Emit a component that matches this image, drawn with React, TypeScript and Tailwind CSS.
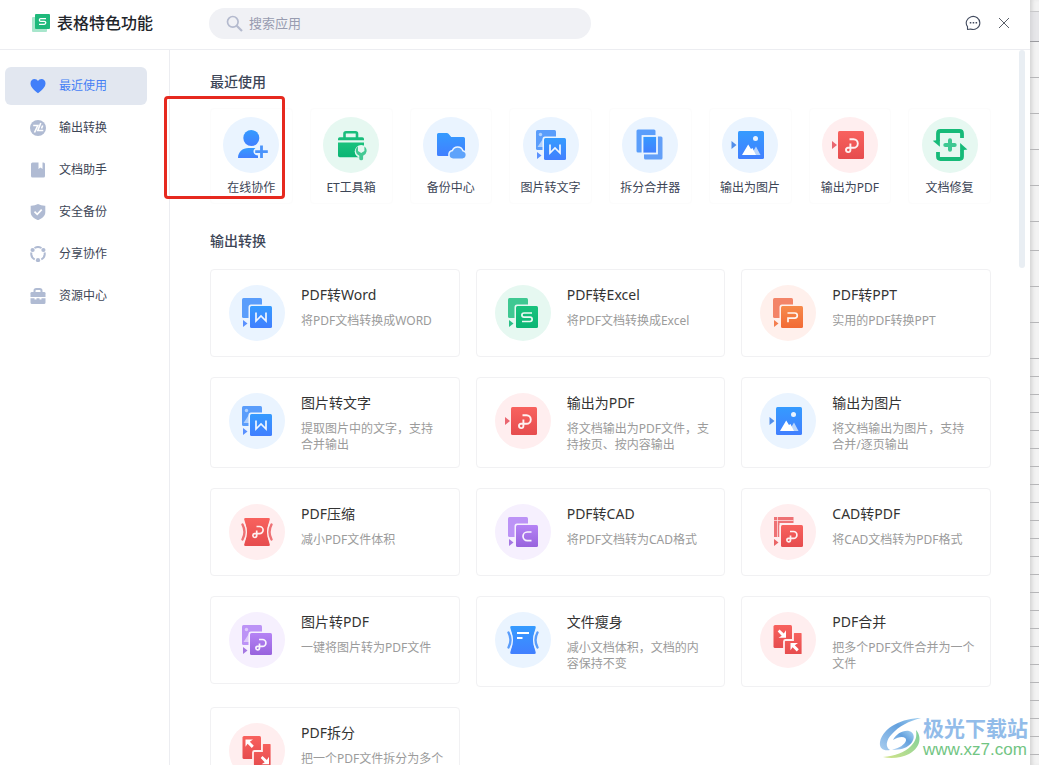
import React from "react";

type Tone = "blue" | "green" | "orange" | "red" | "purple";

const TONES: Record<Tone, { tint: string; from: string; to: string; back: string }> = {
  blue: { tint: "#eaf4ff", from: "#359bff", to: "#417fff", back: "#5a9dfb" },
  green: { tint: "#e6f8f1", from: "#1ac27d", to: "#0bb574", back: "#3fc892" },
  orange: { tint: "#fff0ec", from: "#f68a4b", to: "#f26a34", back: "#f38468" },
  red: { tint: "#ffeeef", from: "#f8625e", to: "#e64c4e", back: "#ee7275" },
  purple: { tint: "#f6f0fe", from: "#b583f5", to: "#9863dd", back: "#bc93f6" },
};

const fill = (tone: Tone) => `url(#grad-${tone})`;

function Gradients() {
  return (
    <svg className="absolute size-0" aria-hidden="true">
      <defs>
        {(Object.keys(TONES) as Tone[]).map((tone) => (
          <linearGradient key={tone} id={`grad-${tone}`} x1="0" y1="0" x2="0" y2="1">
            <stop offset="0" stopColor={TONES[tone].from} />
            <stop offset="1" stopColor={TONES[tone].to} />
          </linearGradient>
        ))}
      </defs>
    </svg>
  );
}

function Disc({ tone, children }: { tone: Tone; children: React.ReactNode }) {
  return (
    <svg viewBox="0 0 56 56" className="size-14 shrink-0" fill="none" aria-hidden="true">
      <circle cx="28" cy="28" r="28" fill={TONES[tone].tint} />
      {children}
    </svg>
  );
}

const MARKS = {
  w: "M27 27.500v8.500l5-5 5 5v-8.500",
  s: "M37 28h-8a2 2 0 0 0 0 4.200h6a2 2 0 0 1 0 4.300h-8",
  p: "M27.500 28h7.200a2.600 2.600 0 0 1 0 5.200H28v4",
  c: "M36.500 28h-4.200a4.300 4.300 0 0 0 0 8.600h4.200",
  loop: "M30 27.500h3.500a3.400 3.400 0 0 1 0 6.800h-5a1.800 1.800 0 1 0 2 1.800v-4.600",
};

function Convert({
  tone,
  mark,
  picture,
  ruler,
}: {
  tone: Tone;
  mark: keyof typeof MARKS;
  picture?: boolean;
  ruler?: boolean;
}) {
  const t = TONES[tone];
  return (
    <Disc tone={tone}>
      {ruler ? (
        <g>
          <path d="M14 13h19.500v6H19.500v14H14z" fill={t.back} />
          <path d="M14 16.500h19.500M17.500 13v20" stroke={t.tint} strokeWidth="0.700" />
        </g>
      ) : (
        <rect x="13" y="13" width="20" height="20" rx="1.500" fill={t.back} />
      )}
      {picture && (
        <g fill={t.tint} opacity="0.600">
          <circle cx="17.500" cy="17.500" r="1.700" />
          <path d="M14.500 30l6-9v9z" />
        </g>
      )}
      <path d="M14 35v7l4.500-3.500z" fill={t.to} opacity="0.850" />
      <rect x="19.500" y="19.500" width="25" height="25" rx="2.500" fill={t.tint} />
      <rect x="21" y="21" width="22" height="22" rx="1.500" fill={fill(tone)} />
      <path d={MARKS[mark]} stroke="#fff" strokeOpacity="0.920" strokeWidth="1.700" />
    </Disc>
  );
}

function ExportPdf() {
  return (
    <Disc tone="red">
      <path d="M10 24v8l5-4z" fill="#ea6670" />
      <rect x="16" y="14" width="26" height="28" rx="1.500" fill={fill("red")} />
      <path
        d="M27.500 22.200h4a4.300 4.300 0 0 1 0 8.600h-5.700a2.200 2.200 0 1 0 2.600 2.200v-6.500"
        stroke="#fff"
        strokeOpacity="0.920"
        strokeWidth="1.900"
      />
    </Disc>
  );
}

function ExportImage() {
  return (
    <Disc tone="blue">
      <path d="M9.500 24v8l5-4z" fill="#528ee9" />
      <rect x="16" y="14" width="26" height="28" rx="1.500" fill={fill("blue")} />
      <circle cx="33.500" cy="21.500" r="2.500" fill="#eaf4ff" />
      <path d="M29 38l5-8.500 4.500 8.500z" fill="#b9d5fc" />
      <path d="M20 38l6.200-10.500 2.800 4.500 1.500-1 3.500 7z" fill="#fff" />
    </Disc>
  );
}

function SplitMerge() {
  return (
    <Disc tone="blue">
      <rect x="14.500" y="12.500" width="19" height="23" rx="1.500" fill="#5a9efb" />
      <rect x="22" y="19.500" width="18.500" height="23" rx="1.500" fill="#639ff8" />
      <rect x="20.500" y="19" width="14.500" height="17.500" fill={fill("blue")} stroke="#eaf4ff" strokeWidth="1.800" />
    </Disc>
  );
}

function Collaborate() {
  return (
    <Disc tone="blue">
      <circle cx="28.300" cy="21" r="8" fill={fill("blue")} />
      <path d="M15 41c0-6 4.500-10 10.500-10h7c-3 2-3 7 2.500 7.500V41z" fill={fill("blue")} />
      <path d="M38.500 28.500v12.500M32.200 34.700h12.600" stroke="#4a93fb" strokeWidth="2.800" />
    </Disc>
  );
}

function Toolbox() {
  return (
    <Disc tone="green">
      <path d="M21.500 21v-4.200q0-1.500 1.500-1.500h9.500q1.500 0 1.500 1.500V21" stroke="#19bd7b" strokeWidth="2.600" />
      <path d="M15 22q0-1.700 1.700-1.700h22.600q1.700 0 1.700 1.700v1.300H15z" fill="#19bd7b" />
      <path d="M15 25.500h26v13q0 1.700-1.700 1.700H16.700q-1.700 0-1.700-1.700z" fill={fill("green")} />
      <circle cx="38.200" cy="34.500" r="6.500" fill="#e6f8f1" />
      <path
        d="M35 29.500a5.200 5.200 0 0 0 1.300 9.200V41.800q0 1.500 1.900 1.500t1.900-1.500v-3.100a5.200 5.200 0 0 0 1.300-9.200v4.500l-3.200 1.900-3.200-1.900z"
        fill="#43c993"
      />
    </Disc>
  );
}

function BackupFolder() {
  return (
    <Disc tone="blue">
      <path
        d="M14 17.500q0-1.500 1.500-1.500h8.300q1 0 1.700.8l2.700 3.200h12.300q1.500 0 1.500 1.500v16q0 1.500-1.500 1.500h-25q-1.500 0-1.500-1.500z"
        fill={fill("blue")}
      />
      <path
        d="M30 42.200a4.400 4.400 0 0 1-.6-8.700 5.600 5.600 0 0 1 10.500 0.200 4.300 4.300 0 0 1-.4 8.500z"
        fill="#5ea3fb"
        stroke="#eaf4ff"
        strokeWidth="1.500"
      />
    </Disc>
  );
}

function Repair() {
  return (
    <Disc tone="green">
      <g stroke="#16ba78" strokeWidth="3.800">
        <path d="M16 24v-7.500q0-2.500 2.500-2.500h19q2.500 0 2.500 2.500V21" />
        <path d="M16 35v4.500q0 2.500 2.500 2.500h19q2.500 0 2.500-2.500V33" />
      </g>
      <path d="M10.800 23.700l7.100-1v7.100z" fill="#16ba78" />
      <path d="M38.100 26l7.300 6.600-7.300 1z" fill="#16ba78" />
      <path d="M28 23.300v9.400M23.300 28h9.400" stroke="#3fc892" strokeWidth="4" strokeLinecap="round" />
    </Disc>
  );
}

function Squeeze({ tone, children }: { tone: Tone; children: React.ReactNode }) {
  return (
    <Disc tone={tone}>
      <path
        d="M16.500 14h23q1.800 0 1.200 1.800-4.700 12.200 0 24.400.6 1.800-1.200 1.800h-23q-1.800 0-1.200-1.800 4.700-12.200 0-24.400-.6-1.800 1.200-1.800z"
        fill={fill(tone)}
      />
      <path
        d="M13.500 20q4 8 0 16M42.500 20q-4 8 0 16"
        stroke={TONES[tone].tint}
        strokeWidth="5"
        strokeLinecap="round"
      />
      <path
        d="M13.500 20.500q4 7.500 0 15M42.500 20.500q-4 7.500 0 15"
        stroke={TONES[tone].back}
        strokeWidth="2.400"
        strokeLinecap="round"
      />
      {children}
    </Disc>
  );
}

function Pages({ inward }: { inward: boolean }) {
  return (
    <Disc tone="red">
      <rect x="13.500" y="13" width="18.500" height="23" rx="1.500" fill={fill("red")} />
      <path
        d="M34.500 20H41q1.500 0 1.500 1.500v20q0 1.500-1.500 1.500H25.500q-1.500 0-1.500-1.500v-12q0-1.500 1.500-1.500H33v-6.500q0-1.500 1.500-1.500z"
        fill={fill("red")}
        stroke="#ffeeef"
        strokeWidth="1.800"
      />
      <g fill="#fff">
        {inward ? (
          <>
            <path d="M19.500 17.500l4.300 4 2.200-3.200v7.400h-7.500l3.200-2-4-4.300z" />
            <path d="M30.500 31h7.500l-3.200 2.200 4 4-2 2.200-4.200-4.200-2.100 3z" />
          </>
        ) : (
          <>
            <path d="M16.500 16.500H24l-3.200 2.200 4 4-2 2.200-4.200-4.200-2.100 3z" />
            <path d="M33.500 33l4.300 4 2.200-3.200v7.400h-7.500l3.200-2-4-4.300z" />
          </>
        )}
      </g>
    </Disc>
  );
}

const recent = [
  { label: "在线协作", icon: <Collaborate /> },
  { label: "ET工具箱", icon: <Toolbox /> },
  { label: "备份中心", icon: <BackupFolder /> },
  { label: "图片转文字", icon: <Convert tone="blue" mark="w" picture /> },
  { label: "拆分合并器", icon: <SplitMerge /> },
  { label: "输出为图片", icon: <ExportImage /> },
  { label: "输出为PDF", icon: <ExportPdf /> },
  { label: "文档修复", icon: <Repair /> },
];

const tools = [
  { title: "PDF转Word", text: "将PDF文档转换成WORD", icon: <Convert tone="blue" mark="w" /> },
  { title: "PDF转Excel", text: "将PDF文档转换成Excel", icon: <Convert tone="green" mark="s" /> },
  { title: "PDF转PPT", text: "实用的PDF转换PPT", icon: <Convert tone="orange" mark="p" /> },
  { title: "图片转文字", text: "提取图片中的文字，支持合并输出", icon: <Convert tone="blue" mark="w" picture /> },
  { title: "输出为PDF", text: "将文档输出为PDF文件，支持按页、按内容输出", icon: <ExportPdf /> },
  { title: "输出为图片", text: "将文档输出为图片，支持合并/逐页输出", icon: <ExportImage /> },
  {
    title: "PDF压缩",
    text: "减小PDF文件体积",
    icon: (
      <Squeeze tone="red">
        <path
          d="M27.500 22.500h3a3.600 3.600 0 0 1 0 7.200h-5a1.900 1.900 0 1 0 2.200 1.900v-5"
          stroke="#fff"
          strokeOpacity="0.920"
          strokeWidth="1.700"
        />
      </Squeeze>
    ),
  },
  { title: "PDF转CAD", text: "将PDF文档转为CAD格式", icon: <Convert tone="purple" mark="c" /> },
  { title: "CAD转PDF", text: "将CAD文档转为PDF格式", icon: <Convert tone="red" mark="loop" ruler /> },
  { title: "图片转PDF", text: "一键将图片转为PDF文件", icon: <Convert tone="purple" mark="loop" picture /> },
  {
    title: "文件瘦身",
    text: "减小文档体积，文档的内容保持不变",
    icon: (
      <Squeeze tone="blue">
        <path d="M22 21h12M22 26h5.500" stroke="#fff" strokeWidth="1.800" />
      </Squeeze>
    ),
  },
  { title: "PDF合并", text: "把多个PDF文件合并为一个文件", icon: <Pages inward /> },
  { title: "PDF拆分", text: "把一个PDF文件拆分为多个", icon: <Pages inward={false} /> },
];

const nav = [
  {
    label: "最近使用",
    icon: <path d="M8 15.300C3.500 11.800.500 9 .500 5.300.500 2.800 2.300 1 4.500 1 6 1 7.300 1.800 8 3c.7-1.200 2-2 3.500-2 2.200 0 4 1.800 4 4.300 0 3.700-3 6.500-7.500 10z" />,
  },
  {
    label: "输出转换",
    icon: (
      <>
        <circle cx="8" cy="8" r="8" />
        <path d="M3.200 5.500h4.600L4.500 12.500M10.800 3L7.800 10.500h5.500M12.700 5.500l-1.200 3" fill="none" stroke="#fff" strokeWidth="1.600" />
      </>
    ),
  },
  {
    label: "文档助手",
    icon: <path d="M2.500.500h6v6.500l2-1.600 2 1.600V.500h1q1.500 0 1.500 1.500v12q0 1.500-1.500 1.500h-11Q1 15.500 1 14V2Q1 .500 2.500.500z" />,
  },
  {
    label: "安全备份",
    icon: (
      <>
        <path d="M8 0q3.500 2 7.300 1.800V8c0 4-3 6.500-7.300 8.200C3.700 14.500.7 12 .7 8V1.800Q4.500 2 8 0z" />
        <path d="M4.500 7.700l2.700 2.700 4.500-4.700" fill="none" stroke="#fff" strokeWidth="1.700" />
      </>
    ),
  },
  {
    label: "分享协作",
    icon: (
      <>
        <path
          d="M4.500 2a6.800 6.800 0 0 1 7 0M14.600 6.500a6.800 6.800 0 0 1-3.300 7M4.700 13.500a6.800 6.800 0 0 1-3.300-7"
          fill="none"
          stroke="currentColor"
          strokeWidth="2"
        />
        <circle cx="2.600" cy="4" r="2.100" />
        <circle cx="13.400" cy="4" r="2.100" />
        <circle cx="8" cy="14.200" r="2.100" />
      </>
    ),
  },
  {
    label: "资源中心",
    icon: (
      <>
        <path d="M4.500 4.500V2.800Q4.500 1 6.300 1h3.400q1.800 0 1.800 1.800v1.700" fill="none" stroke="currentColor" strokeWidth="2" />
        <path d="M1.800 4h12.400q1.300 0 1.300 1.300v3.700H.500V5.300Q.500 4 1.800 4z" />
        <path d="M.500 10.200h4v1.300h2v-1.300h3v1.300h2v-1.300h4v4.300q0 1.500-1.500 1.500H2q-1.500 0-1.500-1.500z" />
      </>
    ),
  },
];

function SheetEdge() {
  const wide = "h-9 shrink-0 border-b border-[#b6b6b8]";
  const rows = [wide, wide, wide, wide, wide, "h-[29px] shrink-0 border-b border-[#b6b6b8]", wide, wide, wide];
  return (
    <div
      className="relative flex w-[9px] shrink-0 flex-col overflow-hidden bg-[#f3f3f3] shadow-[inset_4px_0_4px_-2px_#d2d2d2]"
      aria-hidden="true"
    >
      <div className="h-3 shrink-0 border-b border-[#c8c8ca]" />
      <div className="h-[30px] shrink-0 border-b border-[#9b9b9f] bg-[#d5d5dc]/40" />
      {rows.map((row, i) => (
        <div key={i} className={row} />
      ))}
      {Array.from({ length: 30 }, (_, i) => (
        <div key={i} className="h-[18px] shrink-0 border-b border-[#b6b6b8]" />
      ))}
    </div>
  );
}

function Watermark() {
  return (
    <div className="pointer-events-none absolute right-[11px] bottom-[5px] flex items-center">
      <svg viewBox="0 0 44 42" className="h-[42px] w-11" fill="none" aria-hidden="true">
        <defs>
          <linearGradient id="swirl-blue" x1="0" y1="1" x2="1" y2="0">
            <stop offset="0" stopColor="#a9cdef" />
            <stop offset="0.600" stopColor="#64a1de" />
            <stop offset="1" stopColor="#a9d4f2" />
          </linearGradient>
          <linearGradient id="swirl-green" x1="0" y1="1" x2="1" y2="0">
            <stop offset="0" stopColor="#d3e48a" />
            <stop offset="1" stopColor="#7ccf9b" />
          </linearGradient>
        </defs>
        <path d="M42 1C24 1 4 10 1 25c-1 7 4 9 10 8-5-3-4-10 2-16C20 9 30 4 42 1z" fill="url(#swirl-blue)" />
        <path
          d="M14 23c3-6 10-10 16-9 6 1.500 6 8 2 12.500-4 4.500-11 7-19 6 7-1 13-5 14-9 .8-4-6-5-13-.5z"
          fill="url(#swirl-blue)"
        />
        <path d="M37 13c7 8 3 19-7 24-8 4-18 5-26 3 12-1 22-4.500 28-11 5-5 6-10 5-16z" fill="url(#swirl-green)" />
      </svg>
      <div className="flex flex-col items-start">
        <span className="text-[21px] leading-6 font-bold text-[#92bce9]">极光下载站</span>
        <span className="font-['Liberation_Sans',sans-serif] text-[17px] leading-5 text-[#72c583]">www.xz7.com</span>
      </div>
    </div>
  );
}

export default function App() {
  return (
    <div
      lang="zh-CN"
      className="relative flex h-screen overflow-hidden bg-white font-['Noto_Sans','Noto_Sans_CJK_SC',sans-serif] text-[#3c4556]"
    >
      <Gradients />
      <div className="relative flex min-w-0 flex-1 flex-col">
        <header className="flex h-[50px] shrink-0 items-center border-b border-[#ecedf1] pb-[3px]">
          <div className="flex w-[209px] shrink-0 items-center gap-[7px] pl-8">
            <svg viewBox="0 0 18 18" className="size-[18px]" fill="none" aria-hidden="true">
              <rect x="0" y="3" width="15" height="15" rx="1" fill="#a8e6cc" />
              <rect x="3" y="0" width="15" height="15" rx="1" fill="#1fb97b" />
              <path d="M14 4.700H8.700a1.300 1.300 0 0 0 0 2.700h3.600a1.400 1.400 0 0 1 0 2.900H7" stroke="#fff" strokeWidth="1.300" />
            </svg>
            <h1 className="text-base leading-6 font-medium text-[#22252b]">表格特色功能</h1>
          </div>
          <label className="flex h-[31px] w-full max-w-[382px] items-center gap-[6px] rounded-full bg-[#f0f1f5] px-[17px]">
            <svg viewBox="0 0 17 17" className="size-[17px] shrink-0" fill="none" stroke="#b4bace" aria-hidden="true">
              <circle cx="6.800" cy="6.800" r="5.300" strokeWidth="1.700" />
              <path d="M10.700 10.700l5.300 5.300" strokeWidth="2.200" />
            </svg>
            <input
              type="text"
              aria-label="搜索应用"
              placeholder="搜索应用"
              className="min-w-0 flex-1 bg-transparent text-[13px] leading-5 outline-none placeholder:text-[#989cb0]"
            />
          </label>
          <div className="ml-auto flex items-center gap-4 pr-[19px]">
            <button type="button" aria-label="反馈">
              <svg viewBox="0 0 16 16" className="size-4" fill="none" stroke="#424b5f" aria-hidden="true">
                <path d="M2.500 14.500V11.700A6.800 6.500 0 1 1 5.600 14L2.500 14.500z" strokeWidth="1.100" strokeLinejoin="round" />
                <path d="M4.800 7.800h1.500M7.700 7.800h1.500M10.600 7.800h1.500" strokeWidth="1.400" />
              </svg>
            </button>
            <button type="button" aria-label="关闭">
              <svg viewBox="0 0 14 14" className="size-[14px]" fill="none" stroke="#5a5f69" aria-hidden="true">
                <path d="M2 2l10 10M12 2L2 12" strokeWidth="1" />
              </svg>
            </button>
          </div>
        </header>

        <div className="flex min-h-0 flex-1">
          <nav className="flex w-[170px] shrink-0 flex-col gap-1 border-r border-[#ecedf1] pt-[17px] pr-[22px] pl-[5px]">
            {nav.map((item, i) => (
              <a
                key={item.label}
                href="#"
                aria-current={i === 0 ? "page" : undefined}
                className={
                  i === 0
                    ? "flex h-[38px] items-center gap-[13px] rounded-md bg-[#e2e7f0] pl-[25px] text-xs text-[#4580f5]"
                    : "flex h-[38px] items-center gap-[13px] rounded-md pl-[25px] text-xs text-[#3c4556]"
                }
              >
                <svg
                  viewBox="0 0 16 16"
                  className={i === 0 ? "size-4 text-[#417ff9]" : "size-4 text-[#b0bbd3]"}
                  fill="currentColor"
                  aria-hidden="true"
                >
                  {item.icon}
                </svg>
                {item.label}
              </a>
            ))}
          </nav>

          <main className="min-w-0 flex-1 overflow-hidden pt-[22px] pr-[39px] pl-10">
            <h2 className="text-sm leading-5 font-medium">最近使用</h2>
            <div className="mt-4 grid grid-cols-8 gap-x-[17px]">
              {recent.map((item) => (
                <button
                  key={item.label}
                  type="button"
                  className="flex h-24 flex-col items-center gap-[7px] rounded border border-[#fcfcfc] pt-2"
                >
                  {item.icon}
                  <span className="text-xs leading-4 whitespace-nowrap">{item.label}</span>
                </button>
              ))}
            </div>

            <h2 className="mt-[27px] text-sm leading-5 font-medium">输出转换</h2>
            <div className="mt-[18px] grid grid-cols-3 items-start gap-x-4 gap-y-5">
              {tools.map((tool) => (
                <button
                  key={tool.title}
                  type="button"
                  className="flex min-h-[88px] items-start gap-4 rounded border border-[#f1f1f3] pt-[15px] pr-[15px] pb-[14px] pl-[18px] text-left"
                >
                  {tool.icon}
                  <span className="flex min-w-0 flex-1 flex-col gap-2">
                    <span className="text-sm leading-5 text-[#333]">{tool.title}</span>
                    <span className="text-xs leading-4 text-[#9b9b9b]">{tool.text}</span>
                  </span>
                </button>
              ))}
            </div>
          </main>
        </div>

        <div className="absolute top-[50px] right-[5px] h-[218px] w-[6px] rounded-full bg-[#e9eef3]" aria-hidden="true" />
      </div>
      <SheetEdge />

      <div
        className="pointer-events-none absolute top-24 left-[164px] h-[103px] w-[121px] rounded border-[3px] border-[#e6291f]"
        aria-hidden="true"
      />
      <Watermark />
    </div>
  );
}
